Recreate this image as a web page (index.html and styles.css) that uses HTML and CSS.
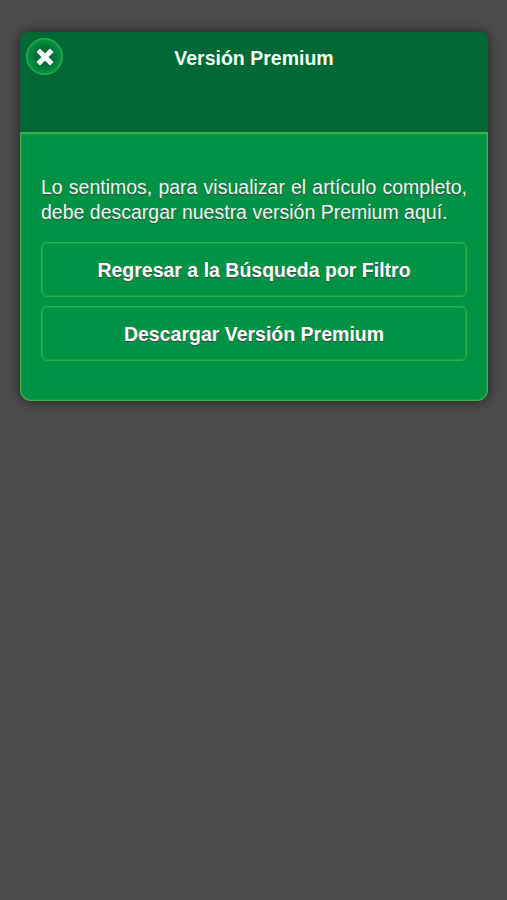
FILE: index.html
```html
<!DOCTYPE html>
<html lang="es">
<head>
  <meta charset="UTF-8">
  <meta name="viewport" content="width=device-width, initial-scale=1.0">
  <title>Versión Premium</title>
  <link rel="stylesheet" href="styles.css">
</head>
<body>
  <div class="dialog" role="dialog" aria-labelledby="dialog-title">
    <header class="dialog-header">
      <a href="#" class="close-btn" aria-label="Cerrar">
        <svg viewBox="0 0 20 20" width="20" height="20">
          <path d="M5 2.5 L10 7.5 L15 2.5 L17.5 5 L12.5 10 L17.5 15 L15 17.5 L10 12.5 L5 17.5 L2.5 15 L7.5 10 L2.5 5 Z" />
        </svg>
      </a>
      <h1 id="dialog-title">Versión Premium</h1>
    </header>
    <div class="dialog-content">
      <p>Lo sentimos, para visualizar el artículo completo, debe descargar nuestra versión Premium aquí.</p>
      <a href="#" class="btn">Regresar a la Búsqueda por Filtro</a>
      <a href="#" class="btn">Descargar Versión Premium</a>
    </div>
  </div>
</body>
</html>
```

FILE: styles.css
```css
* { box-sizing: border-box; margin: 0; padding: 0; }
body {
  background: #4c4c4c;
  color: #fff;
  font-family: "Liberation Sans", Helvetica, Arial, sans-serif;
  min-height: 100vh;
  padding: 32px 19px 0 20px;
}
.dialog {
  border-radius: 11px;
  box-shadow: 0 0 13px rgba(0,0,0,0.6);
}
.dialog-header {
  position: relative;
  height: 100px;
  padding-top: 14px;
  background: #006937;
  border-radius: 8px 8px 0 0;
  text-align: center;
}
.dialog-header h1 {
  color: #f2fff5;
  font-size: 19.5px;
  line-height: 25px;
}
.close-btn {
  position: absolute;
  top: 6px;
  left: 6px;
  width: 37px;
  height: 37px;
  display: flex;
  align-items: center;
  justify-content: center;
  background: radial-gradient(circle, #006e35 35%, #009245 68%);
  border: 1px solid #39b54a;
  border-radius: 50%;
  box-shadow: inset 0 0 0 1px rgba(57,181,74,0.3);
}
.close-btn path {
  fill: #fff;
  stroke: #fff;
  stroke-width: 1.6;
  stroke-linejoin: round;
}
.dialog-content {
  height: 269px;
  padding: 41px 20px 0;
  background: #009245;
  border: 1px solid #39b54a;
  border-top: 2px solid #39b150;
  border-radius: 0 0 11px 11px;
  box-shadow: inset 0 0 0 1px rgba(57,181,74,0.3);
}
.dialog-content p {
  margin-bottom: 17px;
  color: #e8faee;
  font-size: 19.5px;
  line-height: 25px;
  text-align: justify;
  text-shadow: 0 1px 1px #444;
}
.btn {
  display: block;
  height: 55px;
  margin-bottom: 9px;
  border: 1px solid #2fae52;
  border-radius: 6px;
  box-shadow: inset 0 0 0 1px rgba(57,181,88,0.4);
  color: #fff;
  font-size: 19.5px;
  font-weight: bold;
  line-height: 54px;
  text-align: center;
  text-decoration: none;
  text-shadow: 0 1px 1px #444;
}
```
